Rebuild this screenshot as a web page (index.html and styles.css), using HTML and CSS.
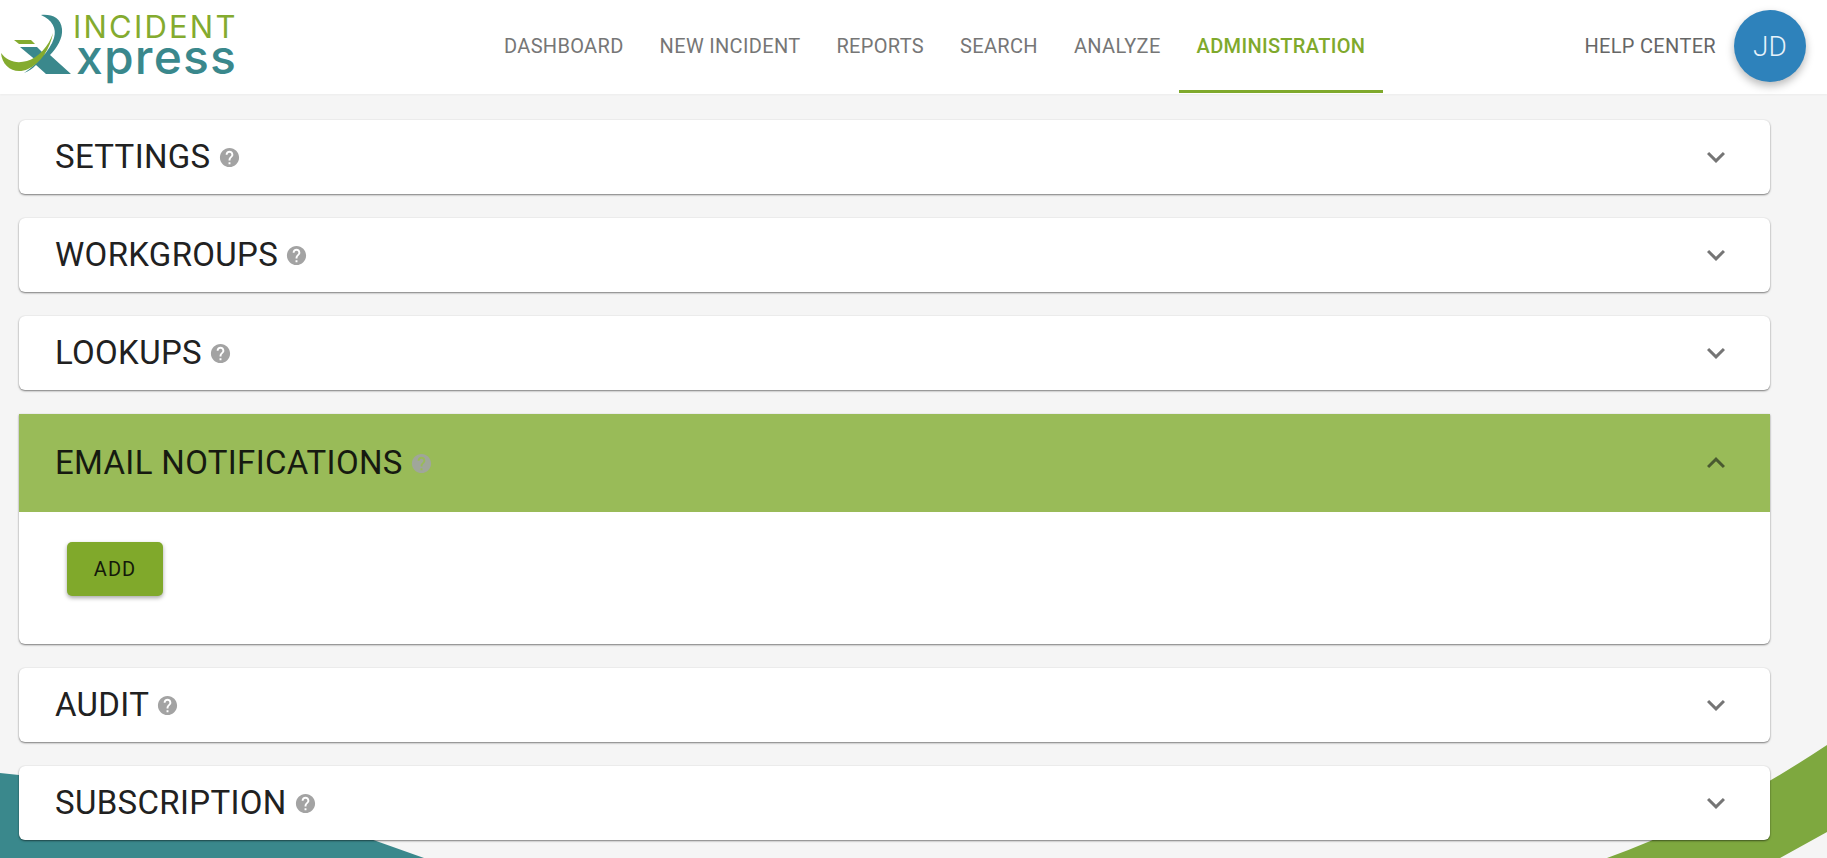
FILE: index.html
```html
<!DOCTYPE html>
<html lang="en">
<head>
<meta charset="utf-8">
<title>Incident Xpress - Administration</title>
<link rel="stylesheet" href="styles.css">
</head>
<body>
<svg class="swoosh swoosh-left" viewBox="0 0 430 85" aria-hidden="true"><path d="M0 0 L19 2 L320 48 L424 85 L0 85Z"/></svg>
<svg class="swoosh swoosh-right" viewBox="0 0 220 118" aria-hidden="true"><path d="M220 5 Q110 78 0 118 L173 118 L220 92Z"/></svg>
<header class="topbar">
  <a class="logo" href="#">
    <svg class="logo-mark" viewBox="0 0 72 72" aria-hidden="true">
      <path class="mark-teal" d="M41 10 C52 9 61 13 62 24 C63 33 57 43 50 50 L71 69 L46 69 L36 60 C32 64 29 66 24 68 C36 60 50 46 54 33 C57 23 52 15 41 10Z"/>
      <path class="mark-teal" d="M20 42 L37 42 L46 51 L38 57Z"/>
      <path class="mark-green" d="M14 35 L31 35 L35 39 L19 39Z"/>
      <path class="mark-green" d="M1 48 C2 62 15 70 28 64 C41 58 50 44 53 28 C49 41 38 53 27 56 C16 59 7 56 1 48Z"/>
    </svg>
    <span class="logo-text">
      <span class="logo-top">INCIDENT</span>
      <span class="logo-bottom">xpress</span>
    </span>
  </a>
  <nav class="nav">
    <a class="nav-link" href="#">DASHBOARD</a>
    <a class="nav-link" href="#">NEW INCIDENT</a>
    <a class="nav-link" href="#">REPORTS</a>
    <a class="nav-link" href="#">SEARCH</a>
    <a class="nav-link" href="#">ANALYZE</a>
    <a class="nav-link active" href="#">ADMINISTRATION</a>
  </nav>
  <div class="top-right">
    <a class="help" href="#">HELP CENTER</a>
    <div class="avatar">JD</div>
  </div>
</header>
<main class="panels">
  <section class="panel">
    <div class="panel-head"><h2>SETTINGS</h2><svg class="q"><use href="#help"/></svg><svg class="chev"><use href="#down"/></svg></div>
  </section>
  <section class="panel">
    <div class="panel-head"><h2>WORKGROUPS</h2><svg class="q"><use href="#help"/></svg><svg class="chev"><use href="#down"/></svg></div>
  </section>
  <section class="panel">
    <div class="panel-head"><h2>LOOKUPS</h2><svg class="q"><use href="#help"/></svg><svg class="chev"><use href="#down"/></svg></div>
  </section>
  <section class="panel open">
    <div class="panel-head"><h2>EMAIL NOTIFICATIONS</h2><svg class="q"><use href="#help"/></svg><svg class="chev"><use href="#up"/></svg></div>
    <div class="panel-body"><button class="btn" type="button">ADD</button></div>
  </section>
  <section class="panel">
    <div class="panel-head"><h2>AUDIT</h2><svg class="q"><use href="#help"/></svg><svg class="chev"><use href="#down"/></svg></div>
  </section>
  <section class="panel">
    <div class="panel-head"><h2>SUBSCRIPTION</h2><svg class="q"><use href="#help"/></svg><svg class="chev"><use href="#down"/></svg></div>
  </section>
</main>
<svg class="defs" aria-hidden="true">
  <symbol id="help" viewBox="0 0 24 24"><path fill="currentColor" d="M12 2C6.48 2 2 6.48 2 12s4.48 10 10 10 10-4.48 10-10S17.52 2 12 2zm1 17h-2v-2h2v2zm2.07-7.75l-.9.92C13.45 12.9 13 13.5 13 15h-2v-.5c0-1.1.45-2.1 1.17-2.83l1.24-1.26c.37-.36.59-.86.59-1.41 0-1.1-.9-2-2-2s-2 .9-2 2H8c0-2.21 1.79-4 4-4s4 1.79 4 4c0 .88-.36 1.68-.93 2.25z"/></symbol>
  <symbol id="down" viewBox="0 0 24 24"><path fill="currentColor" d="M16.59 8.59 12 13.17 7.41 8.59 6 10l6 6 6-6z"/></symbol>
  <symbol id="up" viewBox="0 0 24 24"><path fill="currentColor" d="M12 8l-6 6 1.41 1.41L12 10.83l4.59 4.58L18 14z"/></symbol>
</svg>
</body>
</html>
```
FILE: styles.css
```css
* { box-sizing: border-box; }
html, body { height: 100%; }
body {
  margin: 0;
  height: 858px;
  overflow: hidden;
  position: relative;
  background: #f5f5f5;
  font-family: Roboto, "Liberation Sans", sans-serif;
  color: #212121;
}
.defs { display: none; }
.swoosh { position: absolute; fill: #3a888c; }
.swoosh-left { left: 0; bottom: 0; width: 430px; height: 85px; }
.swoosh-right { right: 0; bottom: 0; width: 220px; height: 118px; fill: #7ea83f; }

.topbar {
  position: relative;
  z-index: 2;
  height: 94px;
  background: #fff;
  display: flex;
  align-items: flex-start;
  box-shadow: 0 1px 2px rgba(0,0,0,.04);
}
.logo {
  width: 486px;
  display: flex;
  align-items: flex-start;
  text-decoration: none;
  flex: none;
}
.logo-mark { width: 72px; height: 72px; margin-top: 5px; flex: none; }
.mark-teal { fill: #3a888c; }
.mark-green { fill: #84ab2f; }
.logo-text { display: flex; flex-direction: column; margin-left: 1px; }
.logo-top {
  font-family: Inter, sans-serif;
  font-size: 31px;
  line-height: 28px;
  margin-top: 13px;
  letter-spacing: 2.2px;
  font-weight: 400;
  white-space: nowrap;
  color: #84ab2f;
}
.logo-bottom {
  font-family: Inter, sans-serif;
  font-size: 48px;
  line-height: 32px;
  letter-spacing: 1.2px;
  font-weight: 500;
  margin-left: 3px;
  color: #3a888c;
}
.nav { display: flex; align-items: stretch; height: 93px; }
.nav-link {
  padding: 2px 18px 0;
  display: flex;
  align-items: center;
  height: 93px;
  font-size: 20px;
  letter-spacing: .33px;
  font-weight: 400;
  color: #767676;
  text-decoration: none;
  border-bottom: 3px solid transparent;
}
.nav-link.active { color: #7fa92c; font-weight: 500; border-bottom-color: #7fa92c; }
.top-right {
  margin-left: auto;
  display: flex;
  align-items: center;
  gap: 18px;
  padding: 10px 21px 0 0;
}
.help { font-size: 20px; letter-spacing: .33px; color: #666; text-decoration: none; }
.avatar {
  width: 72px;
  height: 72px;
  border-radius: 50%;
  background: #2e82bb;
  color: #e6f2fa;
  font-size: 28px;
  font-weight: 300;
  display: flex;
  align-items: center;
  justify-content: center;
  box-shadow: 0 4px 8px rgba(0,0,0,.28);
}

.panels {
  position: relative;
  z-index: 1;
  padding: 26px 57px 0 19px;
  display: flex;
  flex-direction: column;
  gap: 24px;
}
.panel {
  background: #fff;
  border-radius: 6px;
  box-shadow: 0 1px 2px rgba(0,0,0,.5), 0 0 2px rgba(0,0,0,.06);
}
.panel-head {
  height: 74px;
  display: flex;
  align-items: center;
  padding: 0 36px;
}
.panel-head h2 {
  margin: 0 0 2px;
  font-size: 33px;
  font-weight: 400;
  letter-spacing: .33px;
  color: #212121;
}
.q { width: 23px; height: 23px; margin-left: 7px; color: #a3a3a3; flex: none; }
.chev { width: 36px; height: 36px; margin-left: auto; color: #757575; flex: none; }
.panel.open { border-radius: 0 0 6px 6px; }
.panel.open .panel-head { height: 98px; background: #99bb58; }
.panel.open .panel-head h2 { color: #161a10; }
.panel.open .q { color: #a0a69a; }
.panel.open .chev { color: #4a5a30; }
.panel-body { height: 132px; padding: 30px 48px; }
.btn {
  width: 96px;
  height: 54px;
  border: 0;
  border-radius: 5px;
  background: #80a92b;
  color: #14190a;
  font-family: inherit;
  font-size: 20px;
  letter-spacing: 1px;
  box-shadow: 0 2px 4px rgba(0,0,0,.35);
}
```
